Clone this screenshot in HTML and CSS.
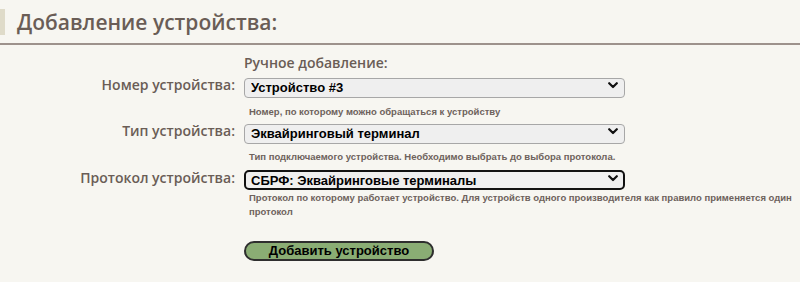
FILE: index.html
```html
<!DOCTYPE html>
<html lang="ru">
<head>
<meta charset="utf-8">
<title>Добавление устройства</title>
<link rel="stylesheet" href="styles.css">
</head>
<body>
<div class="header">
  <h1 class="title">Добавление устройства:</h1>
</div>
<form class="form">
  <div class="cell"></div>
  <div class="section">Ручное добавление:</div>

  <label class="label row1">Номер устройства:</label>
  <div class="field row1">
    <div class="select-wrap">
      <select class="select"><option>Устройство #3</option></select>
      <svg class="chev" viewBox="0 0 10 7" width="10" height="7"><path d="M1.2 1.2 L5 5 L8.8 1.2" fill="none" stroke="#111" stroke-width="2.2" stroke-linecap="round" stroke-linejoin="round"/></svg>
    </div>
    <p class="hint hint1">Номер, по которому можно обращаться к устройству</p>
  </div>

  <label class="label">Тип устройства:</label>
  <div class="field">
    <div class="select-wrap">
      <select class="select"><option>Эквайринговый терминал</option></select>
      <svg class="chev" viewBox="0 0 10 7" width="10" height="7"><path d="M1.2 1.2 L5 5 L8.8 1.2" fill="none" stroke="#111" stroke-width="2.2" stroke-linecap="round" stroke-linejoin="round"/></svg>
    </div>
    <p class="hint hint2">Тип подключаемого устройства. Необходимо выбрать до выбора протокола.</p>
  </div>

  <label class="label">Протокол устройства:</label>
  <div class="field">
    <div class="select-wrap">
      <select class="select focused"><option>СБРФ: Эквайринговые терминалы</option></select>
      <svg class="chev" viewBox="0 0 10 7" width="10" height="7"><path d="M1.2 1.2 L5 5 L8.8 1.2" fill="none" stroke="#111" stroke-width="2.2" stroke-linecap="round" stroke-linejoin="round"/></svg>
    </div>
    <p class="hint hint3">Протокол по которому работает устройство. Для устройств одного производителя как правило применяется один протокол</p>
  </div>

  <div class="cell"></div>
  <div class="field">
    <button type="button" class="btn">Добавить устройство</button>
  </div>
</form>
</body>
</html>
```
FILE: styles.css
```css
html, body {
  margin: 0;
  padding: 0;
  background: #f7f6f1;
}
body {
  font-family: "Open Sans", "Liberation Sans", sans-serif;
  color: #6a5d56;
}
.header {
  box-sizing: border-box;
  height: 45px;
  padding-top: 9px;
  border-bottom: 2px solid #9d928c;
}
.title {
  margin: 0;
  height: 26px;
  border-left: 5px solid #dfdbc9;
  padding-left: 12px;
  font-size: 21px;
  line-height: 26px;
  font-weight: 600;
  color: #6a5d56;
}
.form {
  display: grid;
  grid-template-columns: 244px 548px;
  margin: 0;
  padding-top: 8px;
}
.section {
  font-size: 14px;
  font-weight: 600;
  line-height: 20px;
  height: 20px;
}
.label {
  text-align: right;
  padding-right: 9px;
  font-size: 14px;
  font-weight: 600;
  line-height: 20px;
  height: 20px;
}
.row1 {
  margin-top: 2px;
}
.field {
  display: flex;
  flex-direction: column;
  align-items: flex-start;
}
.select-wrap {
  position: relative;
  width: 381px;
  height: 20px;
}
.select {
  appearance: none;
  -webkit-appearance: none;
  box-sizing: border-box;
  width: 100%;
  height: 20px;
  margin: 0;
  padding: 0 0 0 6px;
  border: 1px solid #a7a7a7;
  border-radius: 4px;
  background: #efefef;
  font-family: "Liberation Sans", Arial, sans-serif;
  font-size: 13px;
  font-weight: bold;
  color: #000;
  line-height: 18px;
}
.select.focused {
  border: 2px solid #111;
  border-radius: 5px;
  padding-left: 5px;
}
.chev {
  position: absolute;
  right: 7px;
  top: 7px;
  pointer-events: none;
}
.hint {
  margin: 0;
  padding-left: 5px;
  font-family: "Liberation Sans", Arial, sans-serif;
  font-size: 9.5px;
  font-weight: bold;
  line-height: 14px;
  color: #6e625c;
}
.hint1 {
  margin-top: 10px;
  margin-bottom: 2px;
}
.hint2 {
  margin-top: 9px;
  margin-bottom: 4px;
}
.hint3 {
  margin-top: 3px;
  margin-bottom: 22px;
}
.btn {
  box-sizing: border-box;
  width: 190px;
  height: 20px;
  margin: 0;
  padding: 0;
  border: 2px solid #2e2e2e;
  border-radius: 10px;
  background: #8aad74;
  font-family: "Liberation Sans", Arial, sans-serif;
  font-size: 13px;
  font-weight: bold;
  color: #000;
  line-height: 16px;
}
```
